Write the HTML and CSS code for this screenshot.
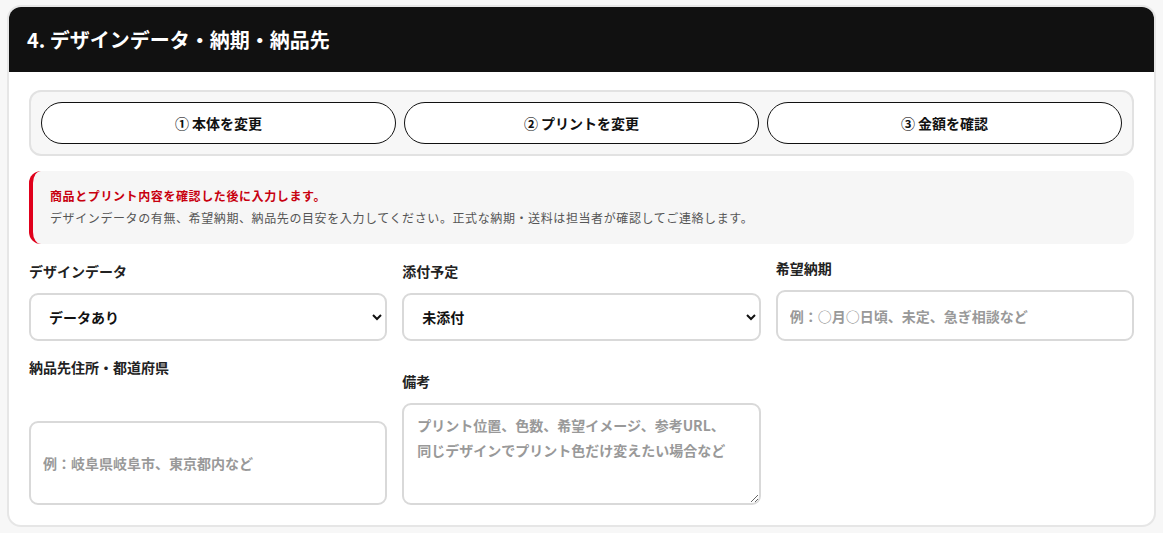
FILE: index.html
```html
<!DOCTYPE html>
<html lang="ja">
<head>
  <meta charset="UTF-8">
  <meta name="viewport" content="width=device-width, initial-scale=1.0">
  <title>デザインデータ・納期・納品先</title>
  <link rel="stylesheet" href="styles.css">
</head>
<body>
  <section class="order-card">
    <h2 class="card-title">4. デザインデータ・納期・納品先</h2>
    <div class="card-body">
      <div class="step-nav">
        <button type="button" class="step-btn">① 本体を変更</button>
        <button type="button" class="step-btn">② プリントを変更</button>
        <button type="button" class="step-btn">③ 金額を確認</button>
      </div>

      <div class="notice">
        <p class="notice-title">商品とプリント内容を確認した後に入力します。</p>
        <p class="notice-text">デザインデータの有無、希望納期、納品先の目安を入力してください。正式な納期・送料は担当者が確認してご連絡します。</p>
      </div>

      <div class="form-grid">
        <div class="field">
          <label for="design-data">デザインデータ</label>
          <select id="design-data" name="design-data">
            <option>データあり</option>
            <option>データなし</option>
          </select>
        </div>

        <div class="field">
          <label for="attach">添付予定</label>
          <select id="attach" name="attach">
            <option>未添付</option>
            <option>添付済み</option>
          </select>
        </div>

        <div class="field">
          <label for="deadline">希望納期</label>
          <input type="text" id="deadline" name="deadline" placeholder="例：○月○日頃、未定、急ぎ相談など">
        </div>

        <div class="field field-address">
          <label for="address">納品先住所・都道府県</label>
          <input type="text" id="address" name="address" class="tall-input" placeholder="例：岐阜県岐阜市、東京都内など">
        </div>

        <div class="field">
          <label for="note">備考</label>
          <textarea id="note" name="note" placeholder="プリント位置、色数、希望イメージ、参考URL、&#10;同じデザインでプリント色だけ変えたい場合など"></textarea>
        </div>
      </div>
    </div>
  </section>
</body>
</html>
```

FILE: styles.css
```css
/* Global Styles */
body {
  font-family: "Noto Sans CJK JP", "Noto Sans", sans-serif;
  background-color: #f7f7f7;
  margin: 0;
  padding: 5px 7px;
  color: #111;
}

.order-card {
  background-color: #ffffff;
  border: 2px solid #e6e6e6;
  border-radius: 14px;
  overflow: hidden;
}

.card-title {
  margin: 0;
  height: 65px;
  display: flex;
  align-items: center;
  padding: 0 18px;
  background-color: #111;
  color: #fff;
  font-size: 20px;
  font-weight: 700;
}

.card-body {
  padding: 18px 20px 20px;
}

/* Step buttons */
.step-nav {
  display: grid;
  grid-template-columns: repeat(3, 1fr);
  gap: 8px;
  padding: 10px;
  background-color: #f7f7f7;
  border: 2px solid #e2e2e2;
  border-radius: 12px;
}

.step-btn {
  height: 42px;
  background-color: #fff;
  border: 1px solid #111;
  border-radius: 999px;
  font-family: inherit;
  font-size: 14px;
  font-weight: 700;
  color: #111;
  cursor: pointer;
}

/* Notice */
.notice {
  margin-top: 15px;
  padding: 14px 18px 15px 17px;
  background-color: #f6f6f6;
  border-left: 4px solid #e0001b;
  border-radius: 12px;
}

.notice p {
  margin: 0;
  font-size: 12px;
  line-height: 22px;
  letter-spacing: 0.05em;
}

.notice-title {
  color: #c8000f;
  font-weight: 700;
}

.notice-text {
  color: #555;
  margin-top: 1px;
}

/* Form */
.form-grid {
  display: grid;
  grid-template-columns: repeat(3, 1fr);
  gap: 16px 15px;
  margin-top: 14px;
  align-items: end;
}

.field {
  display: flex;
  flex-direction: column;
  gap: 12px;
}

.field label {
  font-size: 14px;
  font-weight: 700;
  line-height: 20px;
  color: #222;
}

.field-address {
  gap: 44px;
}

select,
input[type="text"],
textarea {
  width: 100%;
  box-sizing: border-box;
  border: 2px solid #d9d9d9;
  border-radius: 9px;
  background-color: #fff;
  font-family: inherit;
  font-size: 14px;
  font-weight: 700;
  color: #111;
}

select {
  height: 48px;
  padding: 0 8px 0 14px;
}

input[type="text"] {
  height: 51px;
  padding: 0 12px;
}

input.tall-input {
  height: 84px;
}

textarea {
  height: 102px;
  padding: 8px 13px;
  line-height: 25px;
  resize: vertical;
}

::placeholder {
  color: #999;
  font-weight: 700;
}
```
